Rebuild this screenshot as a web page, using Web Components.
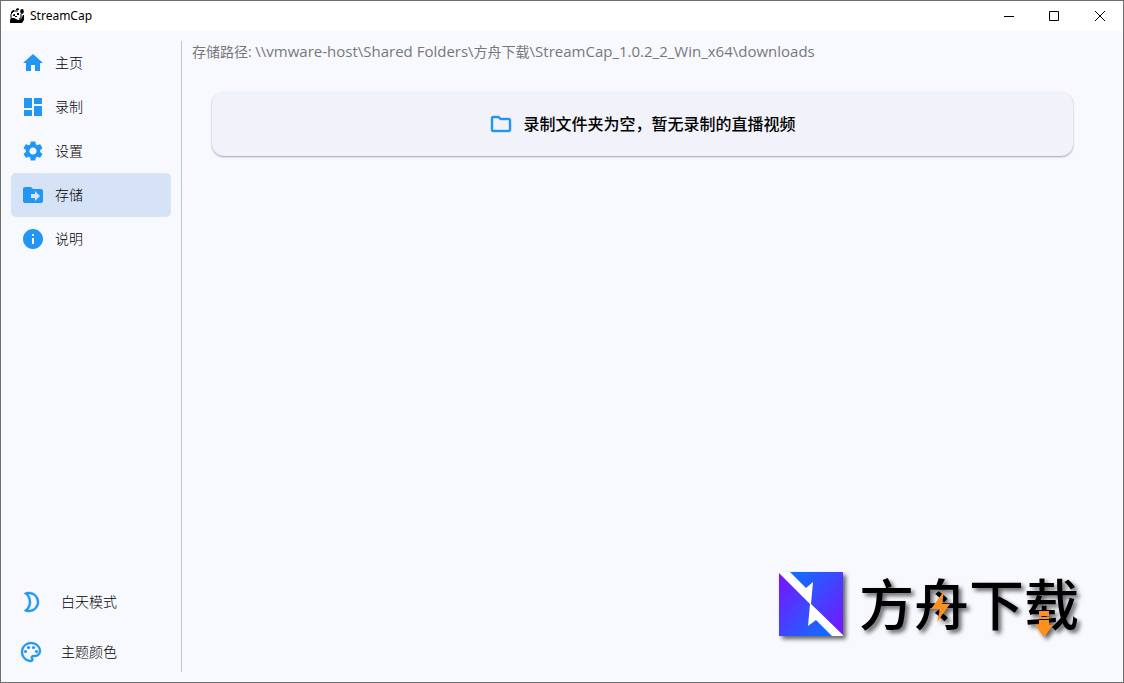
<!DOCTYPE html>
<html lang="zh-CN">
<head>
<meta charset="utf-8">
<title>StreamCap</title>
<style>
  html, body {
    height: 100%;
    margin: 0;
  }

  body {
    font-family: "Open Sans", "Noto Sans CJK SC", sans-serif;
    font-size: 14px;
    line-height: 20px;
    color: #000000;
    --accent: #2196f3;
    --surface: #f8f9ff;
  }

  .latin {
    font-size: 15px;
  }
</style>
</head>
<body>
<app-window>
  <title-bar slot="title">StreamCap</title-bar>
  <side-bar slot="side">
    <nav-item icon="home">主页</nav-item>
    <nav-item icon="dashboard">录制</nav-item>
    <nav-item icon="settings">设置</nav-item>
    <nav-item icon="storage" selected>存储</nav-item>
    <nav-item icon="info">说明</nav-item>
    <side-action slot="bottom" icon="moon">白天模式</side-action>
    <side-action slot="bottom" icon="palette">主题颜色</side-action>
  </side-bar>
  <storage-page>
    <span slot="path">存储路径: <span class="latin">\\vmware-host\Shared Folders\</span>方舟下载<span class="latin">\StreamCap_1.0.2_2_Win_x64\downloads</span></span>
    <empty-card>录制文件夹为空，暂无录制的直播视频</empty-card>
  </storage-page>
  <brand-mark slot="brand">方舟下载</brand-mark>
</app-window>

<script>
const icons = {
  home: '<path d="M10 20v-6h4v6h5v-8h3L12 3 2 12h3v8z"/>',
  dashboard: '<path d="M3 13h8V3H3v10zm0 8h8v-6H3v6zm10 0h8V11h-8v10zm0-18v6h8V3h-8z"/>',
  settings: '<path d="M19.14 12.94c.04-.3.06-.61.06-.94 0-.32-.02-.64-.07-.94l2.03-1.58c.18-.14.23-.41.12-.61l-1.92-3.32c-.12-.22-.37-.29-.59-.22l-2.39.96c-.5-.38-1.03-.7-1.62-.94l-.36-2.54c-.04-.24-.24-.41-.48-.41h-3.84c-.24 0-.43.17-.47.41l-.36 2.54c-.59.24-1.13.57-1.62.94l-2.39-.96c-.22-.08-.47 0-.59.22L2.74 8.87c-.12.21-.08.47.12.61l2.03 1.58c-.05.3-.09.63-.09.94s.02.64.07.94l-2.03 1.58c-.18.14-.23.41-.12.61l1.92 3.32c.12.22.37.29.59.22l2.39-.96c.5.38 1.03.7 1.62.94l.36 2.54c.05.24.24.41.48.41h3.84c.24 0 .44-.17.47-.41l.36-2.54c.59-.24 1.13-.56 1.62-.94l2.39.96c.22.08.47 0 .59-.22l1.92-3.32c.12-.22.07-.47-.12-.61l-2.01-1.58zM12 15.6c-1.98 0-3.6-1.62-3.6-3.6s1.62-3.6 3.6-3.6 3.6 1.62 3.6 3.6-1.62 3.6-3.6 3.6z"/>',
  storage: '<path d="M20 6h-8l-2-2H4c-1.1 0-2 .9-2 2v12c0 1.1.9 2 2 2h16c1.1 0 2-.9 2-2V8c0-1.1-.9-2-2-2zm-6 12v-3h-4v-4h4V8l5 5-5 5z"/>',
  info: '<path d="M12 2C6.48 2 2 6.48 2 12s4.48 10 10 10 10-4.48 10-10S17.52 2 12 2zm1 15h-2v-6h2v6zm0-8h-2V7h2v2z"/>',
  moon: '<path stroke="currentColor" stroke-width=".4" d="M10 4c4.41 0 8 3.59 8 8s-3.59 8-8 8c-.34 0-.68-.02-1.01-.07C10.9 17.7 12 14.9 12 12s-1.1-5.7-3.01-7.93C9.32 4.02 9.66 4 10 4m0-2c-1.82 0-3.53.5-5 1.35C7.99 5.08 10 8.3 10 12s-2.01 6.92-5 8.65C6.47 21.5 8.18 22 10 22c5.52 0 10-4.48 10-10S15.52 2 10 2z"/>',
  palette: '<path stroke="currentColor" stroke-width=".3" d="M12 22C6.49 22 2 17.51 2 12S6.49 2 12 2s10 4.04 10 9c0 3.31-2.69 6-6 6h-1.77c-.28 0-.5.22-.5.5 0 .12.05.23.13.33.41.47.64 1.06.64 1.67 0 1.38-1.12 2.5-2.5 2.5zm0-18c-4.41 0-8 3.59-8 8s3.59 8 8 8c.28 0 .5-.22.5-.5 0-.16-.08-.28-.14-.35-.41-.46-.63-1.05-.63-1.65 0-1.38 1.12-2.5 2.5-2.5H16c2.21 0 4-1.79 4-4 0-3.86-3.59-7-8-7z"/><circle cx="6.5" cy="11.5" r="1.6"/><circle cx="9.5" cy="7.5" r="1.6"/><circle cx="14.5" cy="7.5" r="1.6"/><circle cx="17.5" cy="11.5" r="1.6"/>',
  folder: '<path stroke="currentColor" stroke-width=".4" d="M9.17 6l2 2H20v10H4V6h5.17M10 4H4c-1.1 0-1.99.9-1.99 2L2 18c0 1.1.9 2 2 2h16c1.1 0 2-.9 2-2V8c0-1.1-.9-2-2-2h-8l-2-2z"/>'
};

function icon(name) {
  return `<svg viewBox="0 0 24 24" width="24" height="24" fill="currentColor" aria-hidden="true">${icons[name]}</svg>`;
}

class AppWindow extends HTMLElement {
  constructor(){
    super();
    this.attachShadow({mode: 'open'});
    this.shadowRoot.innerHTML = `
<style>
  :host {
    display: flex;
    flex-direction: column;
    position: relative;
    box-sizing: border-box;
    min-height: 100vh;
    border: 1px solid #6f6f6f;
    background: var(--surface);
  }

  .body {
    flex: 1;
    display: flex;
  }

  main {
    flex: 1;
    min-width: 0;
    padding: 10px;
  }

  .brand {
    position: absolute;
    right: 44px;
    bottom: 46px;
  }
</style>
<slot name="title"></slot>
<div class="body">
  <slot name="side"></slot>
  <main><slot></slot></main>
</div>
<div class="brand"><slot name="brand"></slot></div>
`;
  }
}

class TitleBar extends HTMLElement {
  constructor(){
    super();
    this.attachShadow({mode: 'open'});
    this.shadowRoot.innerHTML = `
<style>
  :host {
    display: flex;
    align-items: center;
    height: 30px;
    padding-left: 8px;
    background: #ffffff;
    color: #000000;
    font-family: "Noto Sans", sans-serif;
    font-size: 12px;
  }

  .name {
    flex: 1;
    margin-left: 5px;
  }

  svg {
    display: block;
  }

  button {
    display: flex;
    align-items: center;
    justify-content: center;
    width: 46px;
    height: 30px;
    padding: 0;
    border: 0;
    background: none;
    color: inherit;
  }
</style>
<svg width="16" height="16" viewBox="0 0 16 16" aria-hidden="true">
  <path d="M2 10V6l3-3h4M12 6v4l-2 1" fill="none" stroke="#000"/>
  <path d="M2 4l2-2h1v1L3 5H2zM7 1l2-1 1 1v1H7z"/>
  <ellipse cx="13" cy="3.500" rx="1.800" ry="2.400"/>
  <path d="M4 7l1-1h1v2H4zM8 5h2v2H8zM6 8h2v1H6z"/>
  <path d="M1 15v-3l1-2h3l4 2 3-1 2-4h1v5l-2 3z"/>
</svg>
<span class="name"><slot></slot></span>
<button aria-label="最小化"><svg width="12" height="10"><path d="M2 5.500h10" stroke="#000"/></svg></button>
<button aria-label="最大化"><svg width="10" height="10"><path d="M.5.5h9v9h-9z" fill="none" stroke="#000"/></svg></button>
<button aria-label="关闭"><svg width="12" height="10"><path d="M1 0l10 10M11 0L1 10" stroke="#000"/></svg></button>
`;
  }
}

class SideBar extends HTMLElement {
  constructor(){
    super();
    this.attachShadow({mode: 'open'});
    this.shadowRoot.innerHTML = `
<style>
  :host {
    display: flex;
    padding: 10px 0 10px 10px;
  }

  .col {
    display: flex;
    flex-direction: column;
    justify-content: space-between;
    width: 160px;
    padding-right: 10px;
    border-right: 1px solid #c3c6cf;
  }

  .bottom {
    display: flex;
    flex-direction: column;
    gap: 10px;
  }
</style>
<div class="col">
  <nav><slot></slot></nav>
  <div class="bottom"><slot name="bottom"></slot></div>
</div>
`;
  }
}

class NavItem extends HTMLElement {
  constructor(){
    super();
    this.attachShadow({mode: 'open'});
    this.shadowRoot.innerHTML = `
<style>
  :host {
    display: block;
  }

  a {
    display: flex;
    align-items: center;
    gap: 10px;
    height: 44px;
    padding: 0 10px;
    border-radius: 5px;
    color: inherit;
    text-decoration: none;
    font-weight: 300;
  }

  :host([selected]) a {
    background: #d6e3f6;
  }

  svg {
    color: var(--accent);
  }
</style>
<a href="#${this.getAttribute('icon')}">${icon(this.getAttribute('icon'))}<slot></slot></a>
`;
  }
}

class SideAction extends HTMLElement {
  constructor(){
    super();
    this.attachShadow({mode: 'open'});
    this.shadowRoot.innerHTML = `
<style>
  :host {
    display: block;
  }

  button {
    display: flex;
    align-items: center;
    gap: 18px;
    height: 40px;
    padding: 0 8px;
    border: 0;
    background: none;
    color: inherit;
    font: inherit;
    font-weight: 300;
  }

  svg {
    color: var(--accent);
  }
</style>
<button type="button">${icon(this.getAttribute('icon'))}<slot></slot></button>
`;
  }
}

class StoragePage extends HTMLElement {
  constructor(){
    super();
    this.attachShadow({mode: 'open'});
    this.shadowRoot.innerHTML = `
<style>
  :host {
    display: flex;
    flex-direction: column;
    gap: 30px;
  }

  .path {
    color: #77777a;
  }

  .list {
    margin: 0 40px 0 20px;
  }
</style>
<div class="path"><slot name="path"></slot></div>
<div class="list"><slot></slot></div>
`;
  }
}

class EmptyCard extends HTMLElement {
  constructor(){
    super();
    this.attachShadow({mode: 'open'});
    this.shadowRoot.innerHTML = `
<style>
  :host {
    display: flex;
    align-items: center;
    justify-content: center;
    gap: 10px;
    padding: 20px;
    border-radius: 12px;
    background: #f1f2fa;
    box-shadow: 0 1px 2px rgba(0, 0, 0, 0.35);
    color: #000000;
    font-size: 16px;
    line-height: 24px;
    font-weight: 500;
  }

  svg {
    color: var(--accent);
  }
</style>
${icon('folder')}<slot></slot>
`;
  }
}

class BrandMark extends HTMLElement {
  constructor(){
    super();
    this.attachShadow({mode: 'open'});
    this.shadowRoot.innerHTML = `
<style>
  :host {
    display: flex;
    align-items: center;
    gap: 16px;
    filter: drop-shadow(3px 3px 2px rgba(0, 0, 0, 0.6));
  }

  .name {
    position: relative;
    font-size: 55px;
    line-height: 64px;
    font-weight: 500;
    color: #000000;
  }

  .sparks {
    position: absolute;
    left: 0;
    top: 0;
  }
</style>
<svg width="64" height="64" viewBox="0 0 64 64" aria-hidden="true">
  <defs>
    <linearGradient id="lo" x1="0" y1="0" x2="1" y2="1"><stop offset="0" stop-color="#7a12ff"/><stop offset="1" stop-color="#0a74ff"/></linearGradient>
    <linearGradient id="hi" x1="0" y1="0" x2="1" y2="1"><stop offset="0" stop-color="#0a74ff"/><stop offset="1" stop-color="#7a12ff"/></linearGradient>
  </defs>
  <path d="M0 0h64v64H0z" fill="#fff"/>
  <path d="M11 0H64V63L32 32 34 10l-7 6z" fill="url(#hi)"/>
  <path d="M0 1L31 32 29 54l8-6 16 16H0z" fill="url(#lo)"/>
</svg>
<span class="name"><slot></slot>
  <svg class="sparks" width="220" height="70" viewBox="0 0 220 70" fill="#ff901f" aria-hidden="true">
    <path d="M85 19L72 37h9l-3 13 13-18h-8z"/>
    <path d="M180 39h10v5h-10zM180 45h10v2h-10zM180 48h10v5h4l-9 12-9-12h4z"/>
  </svg>
</span>
`;
  }
}

window.customElements.define('app-window', AppWindow);
window.customElements.define('title-bar', TitleBar);
window.customElements.define('side-bar', SideBar);
window.customElements.define('nav-item', NavItem);
window.customElements.define('side-action', SideAction);
window.customElements.define('storage-page', StoragePage);
window.customElements.define('empty-card', EmptyCard);
window.customElements.define('brand-mark', BrandMark);
</script>
</body>
</html>
